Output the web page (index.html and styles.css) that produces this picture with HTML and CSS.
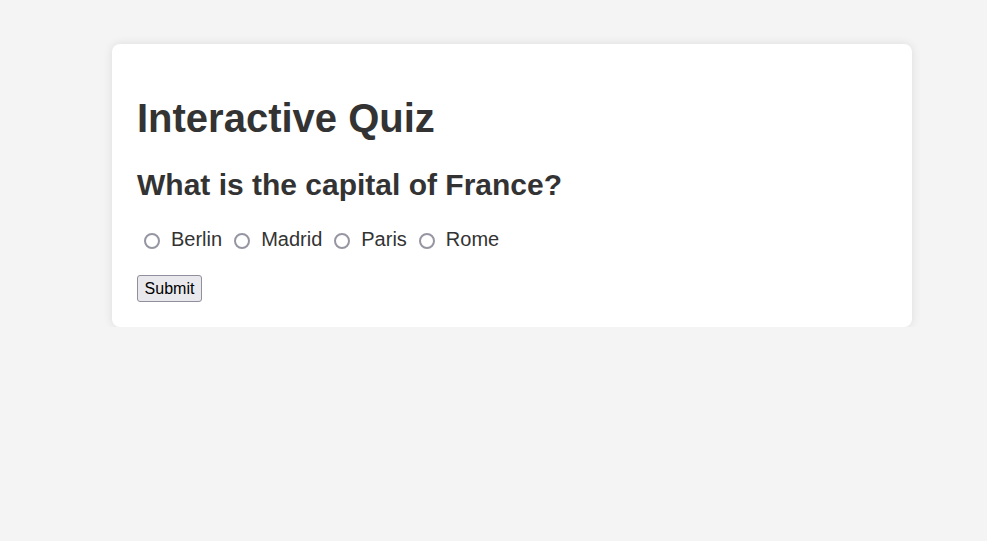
FILE: index.html
```html
<!DOCTYPE html>
<html>
<head>
<meta charset="utf-8">
<link rel="stylesheet" href="styles.css">
</head>
<body>
<div class="quiz-container">
  <h1>Interactive Quiz</h1>
  <h2 class="question">What is the capital of France?</h2>
  <div class="options">
    <label class="option"><input type="radio" name="answer" value="Berlin"><span>Berlin</span></label>
    <label class="option"><input type="radio" name="answer" value="Madrid"><span>Madrid</span></label>
    <label class="option"><input type="radio" name="answer" value="Paris"><span>Paris</span></label>
    <label class="option"><input type="radio" name="answer" value="Rome"><span>Rome</span></label>
  </div>
  <button class="submit">Submit</button>
</div>
</body>
</html>
```

FILE: styles.css
```css
html, body {
  margin: 0;
  padding: 0;
}
body {
  background: #f4f4f4;
  font-family: "Liberation Sans", Arial, sans-serif;
  color: #333;
  padding: 44px 0 0 112px;
}
.quiz-container {
  width: 750px;
  background: #fff;
  padding: 25px;
  border-radius: 8px;
  box-shadow: 0 0 10px rgba(0, 0, 0, 0.1);
}
h1 {
  font-size: 40px;
  margin: 26.8px 0;
}
.question {
  font-size: 30px;
  margin: 24px 0 26px;
}
.options {
  display: flex;
  font-size: 20px;
  line-height: 23px;
  margin-bottom: 24px;
}
.option {
  display: flex;
  align-items: center;
  margin-right: 5px;
}
.option input {
  appearance: none;
  -webkit-appearance: none;
  box-sizing: border-box;
  width: 16px;
  height: 16px;
  border: 2px solid #9596a2;
  border-radius: 50%;
  background: #fff;
  margin: 3px 11px 0 7px;
}
.submit {
  font-family: "Liberation Sans", Arial, sans-serif;
  font-size: 16px;
  line-height: 17px;
  padding: 4px 6px;
  width: 65px;
  color: #000;
  background: #e9e9ed;
  border: 1px solid #8f8f9d;
  border-radius: 3px;
}
```
